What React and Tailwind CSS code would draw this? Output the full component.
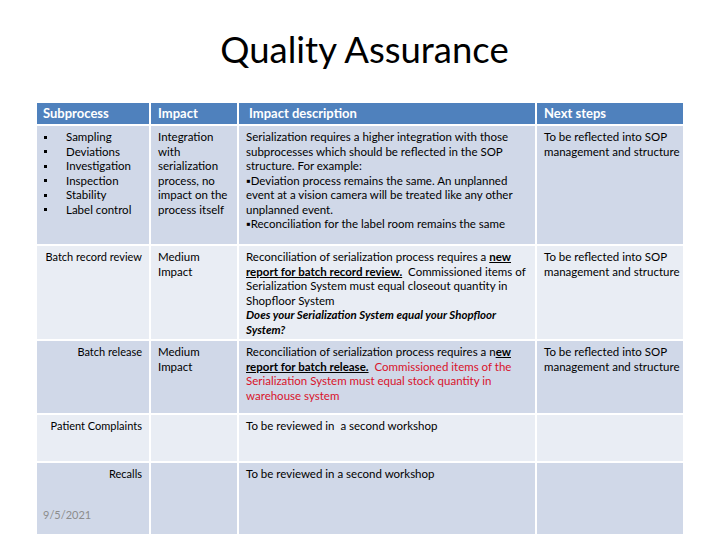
import React from "react";

const dark = "bg-[#d0d8e8]";
const light = "bg-[#e9edf4]";
const red = "text-[#d9132b]";

function Lines({ lines }) {
  return (
    <div className="flex flex-col">
      {lines.map((l, i) => (
        <span key={i} className="whitespace-nowrap">
          {l}
        </span>
      ))}
    </div>
  );
}

export default function App() {
  return (
    <div
      className="relative w-[720px] h-[540px] bg-white text-black overflow-hidden"
      style={{ fontFamily: "Lato, 'Open Sans', sans-serif" }}
    >
      <h1 className="pt-[27px] pl-[9px] h-[103px] text-center text-[36.5px] leading-[44px] font-normal">
        Quality Assurance
      </h1>

      <div className="ml-[37px] grid grid-cols-[112px_86px_296px_146px] grid-rows-[21px_118px_93px_72px_46px_71px] gap-[2px] text-[11.5px] leading-[14.5px]">
        {/* header */}
        <div className="bg-[#4f81bd] text-white font-bold text-[13px] pl-[6px] flex items-center">
          Subprocess
        </div>
        <div className="bg-[#4f81bd] text-white font-bold text-[13px] pl-[7px] flex items-center">
          Impact
        </div>
        <div className="bg-[#4f81bd] text-white font-bold text-[13px] pl-[10px] flex items-center">
          Impact description
        </div>
        <div className="bg-[#4f81bd] text-white font-bold text-[13px] pl-[7px] flex items-center">
          Next steps
        </div>

        {/* row 1 */}
        <div className={`${dark} pt-[4px] pl-[7px]`}>
          {["Sampling", "Deviations", "Investigation", "Inspection", "Stability", "Label control"].map((t) => (
            <div key={t} className="flex items-center whitespace-nowrap">
              <span className="w-[22px] flex">
                <span className="w-[3px] h-[3px] bg-black" />
              </span>
              <span>{t}</span>
            </div>
          ))}
        </div>
        <div className={`${dark} pt-[4px] pl-[7px]`}>
          <Lines lines={["Integration", "with", "serialization", "process, no", "impact on the", "process itself"]} />
        </div>
        <div className={`${dark} pt-[4px] pl-[7px]`}>
          <Lines
            lines={[
              "Serialization requires a higher integration with those",
              "subprocesses which should be reflected in the SOP",
              "structure. For example:",
              "▪Deviation process remains the same. An unplanned",
              "event at a vision camera will be treated like any other",
              "unplanned event.",
              "▪Reconciliation for the label room remains the same",
            ]}
          />
        </div>
        <div className={`${dark} pt-[4px] pl-[7px]`}>
          <Lines lines={["To be reflected into SOP", "management and structure"]} />
        </div>

        {/* row 2 */}
        <div className={`${light} pt-[4px] pr-[7px] text-right text-[11px] whitespace-nowrap`}>Batch record review</div>
        <div className={`${light} pt-[4px] pl-[7px]`}>
          <Lines lines={["Medium", "Impact"]} />
        </div>
        <div className={`${light} pt-[4px] pl-[7px] flex flex-col whitespace-nowrap`}>
          <span>
            Reconciliation of serialization process requires a <b className="underline">new</b>
          </span>
          <span>
            <b className="underline">report for batch record review.</b>&nbsp; Commissioned items of
          </span>
          <span>Serialization System must equal closeout quantity in</span>
          <span>Shopfloor System</span>
          <b className="italic">Does your Serialization System equal your Shopfloor</b>
          <b className="italic">System?</b>
        </div>
        <div className={`${light} pt-[4px] pl-[7px]`}>
          <Lines lines={["To be reflected into SOP", "management and structure"]} />
        </div>

        {/* row 3 */}
        <div className={`${dark} pt-[4px] pr-[7px] text-right text-[11px] whitespace-nowrap`}>Batch release</div>
        <div className={`${dark} pt-[4px] pl-[7px]`}>
          <Lines lines={["Medium", "Impact"]} />
        </div>
        <div className={`${dark} pt-[4px] pl-[7px] flex flex-col whitespace-nowrap`}>
          <span>
            Reconciliation of serialization process requires a n<b className="underline">ew</b>
          </span>
          <span>
            <b className="underline">report for batch release.</b>
            <span className={red}>&nbsp; Commissioned items of the</span>
          </span>
          <span className={red}>Serialization System must equal stock quantity in</span>
          <span className={red}>warehouse system</span>
        </div>
        <div className={`${dark} pt-[4px] pl-[7px]`}>
          <Lines lines={["To be reflected into SOP", "management and structure"]} />
        </div>

        {/* row 4 */}
        <div className={`${light} pt-[4px] pr-[7px] text-right text-[11px] whitespace-nowrap`}>Patient Complaints</div>
        <div className={light}></div>
        <div className={`${light} pt-[4px] pl-[7px] whitespace-pre`}>To be reviewed in  a second workshop</div>
        <div className={light}></div>

        {/* row 5 */}
        <div className={`${dark} pt-[4px] pr-[7px] text-right text-[11px] whitespace-nowrap`}>Recalls</div>
        <div className={dark}></div>
        <div className={`${dark} pt-[4px] pl-[7px] whitespace-nowrap`}>To be reviewed in a second workshop</div>
        <div className={dark}></div>
      </div>

      <div className="absolute left-[43px] top-[507px] text-[11px] text-[#8c8c8c]">9/5/2021</div>
    </div>
  );
}
